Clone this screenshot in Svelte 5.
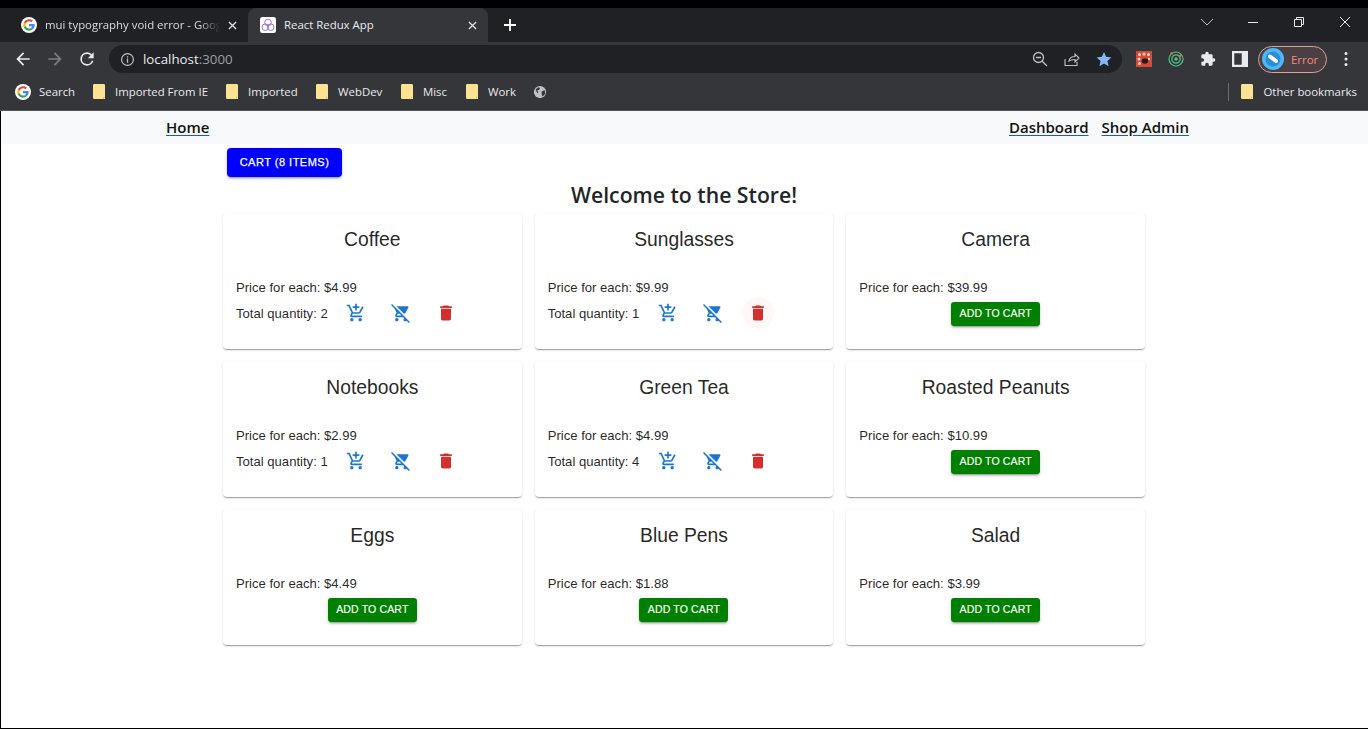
<script lang="ts">
  type Product = { name: string; price: string; qty?: number };

  const products: Product[] = [
    { name: 'Coffee', price: '4.99', qty: 2 },
    { name: 'Sunglasses', price: '9.99', qty: 1 },
    { name: 'Camera', price: '39.99' },
    { name: 'Notebooks', price: '2.99', qty: 1 },
    { name: 'Green Tea', price: '4.99', qty: 4 },
    { name: 'Roasted Peanuts', price: '10.99' },
    { name: 'Eggs', price: '4.49' },
    { name: 'Blue Pens', price: '1.88' },
    { name: 'Salad', price: '3.99' },
  ];

  const bookmarks = [
    { label: 'Imported From IE', width: 133 },
    { label: 'Imported', width: 90 },
    { label: 'WebDev', width: 85 },
    { label: 'Misc', width: 65 },
    { label: 'Work', width: 62 },
  ];

  const addCart = 'M11 9h2V6h3V4h-3V1h-2v3H8v2h3v3zm-4 9c-1.1 0-1.99.9-1.99 2S5.9 22 7 22s2-.9 2-2-.9-2-2-2zm10 0c-1.1 0-1.99.9-1.99 2s.89 2 1.99 2 2-.9 2-2-.9-2-2-2zm-9.83-3.25.03-.12.9-1.63h7.45c.75 0 1.41-.41 1.75-1.03l3.86-7.01L19.42 4h-.01l-1.1 2-2.76 5H8.53l-.13-.27L6.16 6l-.95-2-.94-2H1v2h2l3.6 7.59-1.35 2.45c-.16.28-.25.61-.25.96 0 1.1.9 2 2 2h12v-2H7.42c-.13 0-.25-.11-.25-.25z';
  const removeCart = 'M22.73 22.73 2.77 2.77 2 2l-.73-.73L0 2.54l4.39 4.39 2.21 4.66-1.35 2.45c-.16.28-.25.61-.25.96 0 1.1.9 2 2 2h7.46l1.38 1.38c-.5.36-.83.95-.83 1.62 0 1.1.89 2 1.99 2 .67 0 1.26-.33 1.62-.84L21.46 24l1.27-1.27zM7.42 15c-.14 0-.25-.11-.25-.25l.03-.12.9-1.63h2.36l2 2H7.42zm8.13-2c.75 0 1.41-.41 1.75-1.03l3.58-6.49c.08-.14.12-.31.12-.48 0-.55-.45-1-1-1H6.54l9.01 9zM7 18c-1.1 0-1.99.9-1.99 2S5.9 22 7 22s2-.9 2-2-.9-2-2-2z';
  const trash = 'M6 19c0 1.1.9 2 2 2h8c1.1 0 2-.9 2-2V7H6v12zM19 4h-3.5l-1-1h-5l-1 1H5v2h14V4z';
</script>

{#snippet gLogo()}
  <svg class="fav" viewBox="0 0 48 48">
    <circle cx="24" cy="24" r="24" fill="#fff" />
    <path fill="#ea4335" d="M24 13c3 0 5.4 1 7.3 2.8l4.6-4.6C32.9 8.500 28.900 6.800 24 6.800c-6.800 0-12.600 3.900-15.400 9.500l5.400 4.200C15.300 16.300 19.300 13 24 13z" />
    <path fill="#4285f4" d="M40.800 24.400c0-1.300-.1-2.300-.3-3.400H24v6.400h9.500c-.4 2.300-1.700 4.200-3.700 5.500l5.200 4c3.500-3.200 5.800-7.700 5.800-12.500z" />
    <path fill="#fbbc05" d="M14 27.500c-.4-1.100-.6-2.300-.6-3.500s.2-2.400.6-3.500l-5.400-4.200C7.400 18.600 6.800 21.200 6.800 24s.6 5.400 1.800 7.700l5.400-4.200z" />
    <path fill="#34a853" d="M24 41.200c4.700 0 8.500-1.500 11-4.300l-5.200-4c-1.500 1-3.400 1.600-5.800 1.600-4.700 0-8.700-3.300-10-7.500l-5.400 4.200c2.800 5.600 8.600 10 15.400 10z" />
  </svg>
{/snippet}

{#snippet folder()}
  <svg class="folder" viewBox="0 0 12 16">
    <path fill="#fde293" d="M0 1.500C0 .7.500 0 1.200 0h9.600c.7 0 1.200.7 1.200 1.500V15H1.200C.5 15 0 14.300 0 13.500z" />
    <path fill="#e8b93f" d="M10 15v-2h2z" />
  </svg>
{/snippet}

{#snippet tool(d: string, color: string)}
  <svg class="tool" viewBox="0 0 24 24"><path fill={color} {d} /></svg>
{/snippet}

{#snippet tabClose()}
  <svg class="tab-x" viewBox="0 0 10 10"><path d="M1 1l8 8M9 1l-8 8" stroke="#dadce0" stroke-width="1.500" /></svg>
{/snippet}

<div class="window">
  <div class="tabstrip">
    <div class="tab">
      {@render gLogo()}
      <span class="tab-title faded">mui typography void error - Google Search</span>
      {@render tabClose()}
    </div>
    <div class="tab active">
      <svg class="fav" viewBox="0 0 16 16">
        <rect width="16" height="16" rx="2.500" fill="#fff" />
        <g fill="none" stroke="#8a63d2" stroke-width="0.900">
          <circle cx="8" cy="5.500" r="3.300" />
          <circle cx="5.300" cy="10.200" r="3.300" />
          <circle cx="10.700" cy="10.200" r="3.300" />
        </g>
      </svg>
      <span class="tab-title">React Redux App</span>
      {@render tabClose()}
    </div>
    <svg class="plus" viewBox="0 0 12 12"><path d="M6 0v12M0 6h12" stroke="#fff" stroke-width="1.800" /></svg>
    <div class="win-controls">
      <svg class="win-btn" viewBox="0 0 46 16"><path d="M17 5l6 6 6-6" fill="none" stroke="#bdc1c6" /></svg>
      <svg class="win-btn" viewBox="0 0 46 16"><path d="M18 8.500h10" stroke="#e8eaed" /></svg>
      <svg class="win-btn" viewBox="0 0 46 16"><path d="M18.500 5.500h7v7h-7zM20.500 5.500v-2h7v7h-2" fill="none" stroke="#e8eaed" /></svg>
      <svg class="win-btn" viewBox="0 0 46 16"><path d="M18 3l10 10M28 3L18 13" stroke="#e8eaed" /></svg>
    </div>
  </div>

  <div class="toolbar">
    <div class="nav-btns">
      {@render tool('M20 11H7.830l5.590-5.590L12 4l-8 8 8 8 1.410-1.410L7.830 13H20z', '#e8eaed')}
      {@render tool('M12 4l-1.410 1.410L16.170 11H4v2h12.170l-5.580 5.590L12 20l8-8z', '#7b7d80')}
      {@render tool('M17.650 6.350A7.960 7.960 0 0 0 12 4a8 8 0 1 0 7.730 10h-2.080A6 6 0 1 1 12 6c1.660 0 3.140.69 4.220 1.780L13 11h7V4z', '#e8eaed')}
    </div>
    <div class="omnibox">
      <svg class="info" viewBox="0 0 16 16">
        <circle cx="8" cy="8" r="6.300" fill="none" stroke="#bdc1c6" stroke-width="1.300" />
        <path d="M8 7v4.500M8 4.500v1.400" stroke="#bdc1c6" stroke-width="1.400" />
      </svg>
      <span class="url">localhost<span class="port">:3000</span></span>
      <div class="omni-icons">
        <svg class="omni-icon" viewBox="0 0 16 16">
          <circle cx="6.500" cy="6.500" r="5" fill="none" stroke="#bdc1c6" stroke-width="1.300" />
          <path d="M10.200 10.200L15 15M4 6.500h5" stroke="#bdc1c6" stroke-width="1.300" />
        </svg>
        <svg class="omni-icon" viewBox="0 0 16 16">
          <path d="M1 8v6.500h12V11M5 10c.5-3 3-4.500 6-4.500V3l4 4-4 4V8.500C8.500 8.500 6.500 9 5 10z" fill="none" stroke="#bdc1c6" stroke-width="1.100" />
        </svg>
        <svg class="omni-icon" viewBox="0 0 24 24">
          <path fill="#8ab4f8" d="M12 1.500l3.200 7.300 7.900.8-5.900 5.300 1.700 7.800L12 18.700l-6.900 4 1.700-7.800L.9 9.600l7.900-.8z" />
        </svg>
      </div>
    </div>
    <div class="extensions">
      <svg class="ext" viewBox="0 0 16 16">
        <rect width="16" height="16" fill="#d84a38" />
        <g fill="#f6dcd6">
          <circle cx="3.500" cy="3.500" r="1.500" /><circle cx="8" cy="3" r="1.500" /><circle cx="12.500" cy="3.500" r="1.500" />
          <circle cx="3" cy="8" r="1.500" /><circle cx="3.500" cy="12.500" r="1.500" /><circle cx="13" cy="8" r="1.200" />
        </g>
        <ellipse cx="9" cy="10" rx="3.300" ry="2.800" fill="#2b1b17" />
      </svg>
      <svg class="ext" viewBox="0 0 16 16">
        <g fill="none" stroke="#4fc38a" stroke-width="1.200">
          <circle cx="8" cy="8" r="7" /><circle cx="8" cy="8" r="4.200" />
        </g>
        <circle cx="8" cy="8" r="1.800" fill="#4fc38a" />
        <circle cx="3.500" cy="2.500" r="1.300" fill="#e8663d" />
        <circle cx="12" cy="5" r="1.300" fill="#e8663d" />
      </svg>
      <svg class="ext" viewBox="0 0 24 24">
        <path fill="#e8eaed" d="M20.500 11H19V7a2 2 0 0 0-2-2h-4V3.500a2.500 2.500 0 0 0-5 0V5H4a2 2 0 0 0-2 2v3.800h1.500a2.700 2.700 0 0 1 0 5.400H2V20a2 2 0 0 0 2 2h3.800v-1.500a2.700 2.700 0 0 1 5.400 0V22H17a2 2 0 0 0 2-2v-4h1.500a2.500 2.500 0 0 0 0-5z" />
      </svg>
      <svg class="ext" viewBox="0 0 14 14">
        <rect width="14" height="14" fill="#e8eaed" />
        <rect x="2" y="2" width="6.500" height="10" fill="#35363a" />
      </svg>
    </div>
    <div class="profile">
      <svg class="avatar" viewBox="0 0 22 22">
        <circle cx="11" cy="11" r="11" fill="#4db8f7" />
        <circle cx="11" cy="11" r="7.500" fill="#2a8fd6" />
        <path d="M8 8.500l6 4.500" stroke="#fff" stroke-width="4" stroke-linecap="round" />
      </svg>
      <span class="profile-text">Error</span>
    </div>
    <svg class="dots" viewBox="0 0 4 16">
      <circle cx="2" cy="2.500" r="1.500" fill="#e8eaed" /><circle cx="2" cy="8" r="1.500" fill="#e8eaed" /><circle cx="2" cy="13.500" r="1.500" fill="#e8eaed" />
    </svg>
  </div>

  <div class="bookmarks">
    <div class="bm search-bm">{@render gLogo()}<span>Search</span></div>
    {#each bookmarks as b}
      <div class="bm" style="width: {b.width}px">{@render folder()}<span>{b.label}</span></div>
    {/each}
    <svg class="globe" viewBox="0 0 16 16">
      <circle cx="8" cy="8" r="7" fill="#bdc1c6" />
      <path fill="#35363a" d="M3 5l3-2.500 2 1-1 2-2 .5 1 2.500-1 1zM10 7l3.500-1 .5 4-3 3-1-2z" />
    </svg>
    <div class="bm-right">
      <span class="bm-sep"></span>
      <div class="bm other">{@render folder()}<span>Other bookmarks</span></div>
    </div>
  </div>

  <div class="page">
    <nav class="navbar">
      <a href="#home">Home</a>
      <div class="nav-right">
        <a href="#dashboard">Dashboard</a>
        <a href="#admin">Shop Admin</a>
      </div>
    </nav>

    <main class="store">
      <button class="cart-btn">Cart (8 items)</button>
      <h1>Welcome to the Store!</h1>
      <div class="grid">
        {#each products as p}
          <section class="card">
            <h2>{p.name}</h2>
            <p class="price">Price for each: ${p.price}</p>
            {#if p.qty}
              <div class="qty-row">
                <span class="qty">Total quantity: {p.qty}</span>
                <span class="icon-btn">
                  <svg viewBox="0 0 24 24"><path fill="#1976d2" d={addCart} /></svg>
                </span>
                <span class="icon-btn">
                  <svg viewBox="0 0 24 24"><path fill="#1976d2" d={removeCart} /></svg>
                </span>
                <span class="icon-btn" class:hovered={p.name === 'Sunglasses'}>
                  <svg viewBox="0 0 24 24"><path fill="#d32f2f" d={trash} /></svg>
                </span>
              </div>
            {:else}
              <div class="add-row"><button class="add-btn">Add to cart</button></div>
            {/if}
          </section>
        {/each}
      </div>
    </main>
  </div>
</div>

<style>
  :global(body) { margin: 0; }

  .window {
    height: 729px;
    box-sizing: border-box;
    padding-top: 8px;
    background: #000;
    display: flex;
    flex-direction: column;
    overflow: hidden;
    font-family: "Open Sans", "Noto Sans", sans-serif;
  }

  /* browser chrome */
  .tabstrip {
    height: 34px;
    flex-shrink: 0;
    background: #202124;
    display: flex;
    align-items: flex-start;
    padding-left: 8px;
    box-sizing: border-box;
  }
  .tab {
    width: 240px;
    height: 34px;
    box-sizing: border-box;
    padding: 0 11px 0 13px;
    display: flex;
    align-items: center;
    gap: 8px;
    color: #bdc1c6;
    font: 11.4px "Open Sans", sans-serif;
    border-radius: 8px 8px 0 0;
  }
  .tab.active {
    background: #35363a;
    padding-left: 12px;
    color: #e8eaed;
  }
  .tab-title {
    flex: 1;
    white-space: nowrap;
    overflow: hidden;
    margin-bottom: 2px;
  }
  .faded {
    color: #dadce0;
    mask-image: linear-gradient(to right, #000 88%, transparent 100%);
  }
  .tab-x { width: 9px; height: 9px; flex-shrink: 0; }
  .fav { width: 16px; height: 16px; flex-shrink: 0; }
  .plus { width: 12px; height: 12px; margin: 11px 0 0 16px; }
  .win-controls { margin-left: auto; display: flex; margin-top: 6px; }
  .win-btn { width: 46px; height: 16px; }

  .toolbar {
    height: 34px;
    flex-shrink: 0;
    background: #35363a;
    display: flex;
    align-items: center;
  }
  .nav-btns { display: flex; gap: 12px; padding-left: 13px; }
  .tool { width: 20px; height: 20px; }
  .omnibox {
    margin-left: 12px;
    width: 1013px;
    height: 28px;
    background: #202124;
    border-radius: 14px;
    display: flex;
    align-items: center;
    box-sizing: border-box;
    padding-left: 11px;
  }
  .info { width: 15px; height: 15px; }
  .url { margin-left: 8px; color: #e8eaed; font: 13.3px "Open Sans", sans-serif; }
  .port { color: #9aa0a6; }
  .omni-icons { margin-left: auto; display: flex; gap: 16px; padding-right: 10px; }
  .omni-icon { width: 16px; height: 16px; }
  .extensions { display: flex; gap: 16px; margin-left: 14px; align-items: center; }
  .ext { width: 16px; height: 16px; }
  .profile {
    margin-left: 10px;
    width: 69px;
    height: 27px;
    box-sizing: border-box;
    border: 1px solid #d9a29a;
    border-radius: 14px;
    background: #4a3f42;
    display: flex;
    align-items: center;
    padding-left: 3px;
    gap: 7px;
  }
  .avatar { width: 22px; height: 22px; }
  .profile-text { color: #f28b82; font: 11.4px "Open Sans", sans-serif; }
  .dots { width: 4px; height: 16px; margin-left: 17px; }

  .bookmarks {
    height: 35px;
    flex-shrink: 0;
    background: #35363a;
    display: flex;
    align-items: center;
    padding: 0 0 3px 15px;
    box-sizing: border-box;
    border-bottom: 1px solid #55565a;
    color: #e8eaed;
    font: 11.4px "Open Sans", sans-serif;
  }
  .bm { display: flex; align-items: center; gap: 10px; white-space: nowrap; flex-shrink: 0; }
  .search-bm { gap: 8px; width: 78px; }
  .folder { width: 12px; height: 16px; flex-shrink: 0; }
  .globe { width: 14px; height: 14px; margin-left: 5px; }
  .bm-right { margin-left: auto; display: flex; align-items: center; padding-right: 11px; }
  .bm-sep { width: 1px; height: 18px; background: #6a6b6f; margin-right: 12px; }

  /* page */
  .page {
    flex: 1;
    background: #fff;
    margin-left: 1px;
    margin-bottom: 1px;
    min-height: 0;
  }
  .navbar {
    height: 33px;
    background: #f8f9fa;
    display: flex;
    align-items: center;
    justify-content: space-between;
    padding: 0 179px 2px 165px;
    box-sizing: border-box;
  }
  .navbar a {
    color: #111;
    font-size: 15px;
    font-weight: 600;
    text-decoration-color: #0b5ed7;
    text-underline-offset: 2px;
  }
  .nav-right { display: flex; gap: 13px; }

  .store { width: 922px; margin-left: 222px; }
  .cart-btn {
    display: block;
    margin: 4px 0 0 4px;
    width: 115px;
    height: 29px;
    padding: 0 0 2px;
    border: none;
    border-radius: 4px;
    background: #00f;
    color: #fff;
    font: 500 11px "Liberation Sans", sans-serif;
    letter-spacing: 0.5px;
    -webkit-text-stroke: 0.25px #fff;
    text-transform: uppercase;
    box-shadow: 0 3px 1px -2px rgba(0,0,0,.2), 0 2px 2px 0 rgba(0,0,0,.14), 0 1px 5px 0 rgba(0,0,0,.12);
  }
  h1 {
    margin: 1px 0 0;
    height: 35px;
    line-height: 33px;
    text-align: center;
    font-size: 21.2px;
    font-weight: 600;
    color: #212529;
  }
  .grid {
    display: grid;
    grid-template-columns: repeat(3, 1fr);
    grid-auto-rows: 136px;
    gap: 12px 13px;
  }
  .card {
    background: #fff;
    border-radius: 4px;
    box-shadow: 0 2px 1px -1px rgba(0,0,0,.2), 0 1px 1px 0 rgba(0,0,0,.14), 0 1px 3px 0 rgba(0,0,0,.12);
    padding: 13px;
    box-sizing: border-box;
    font-family: "Liberation Sans", sans-serif;
    color: rgba(0,0,0,.87);
  }
  h2 {
    margin: 0;
    height: 27px;
    line-height: 27px;
    text-align: center;
    font-size: 19.3px;
    font-weight: 400;
  }
  .price { margin: 25px 0 0; font-size: 13.1px; line-height: 20px; }
  .qty-row { display: flex; align-items: center; height: 32px; margin-top: -1px; }
  .qty { font-size: 13.1px; margin-right: 12px; width: 92px; white-space: nowrap; }
  .icon-btn {
    width: 32px;
    height: 32px;
    border-radius: 50%;
    display: flex;
    align-items: center;
    justify-content: center;
    margin-right: 13px;
  }
  .icon-btn svg { width: 20px; height: 20px; }
  .hovered { background: rgba(211,47,47,.04); }
  .add-row { display: flex; justify-content: center; padding-top: 4px; }
  .add-btn {
    width: 89px;
    height: 24px;
    padding: 0 0 2px;
    border: none;
    border-radius: 3px;
    background: #008000;
    color: #fff;
    font: 400 10.5px "Liberation Sans", sans-serif;
    letter-spacing: 0.15px;
    -webkit-text-stroke: 0.15px #fff;
    text-transform: uppercase;
    box-shadow: 0 3px 1px -2px rgba(0,0,0,.2), 0 2px 2px 0 rgba(0,0,0,.14), 0 1px 5px 0 rgba(0,0,0,.12);
  }
</style>
